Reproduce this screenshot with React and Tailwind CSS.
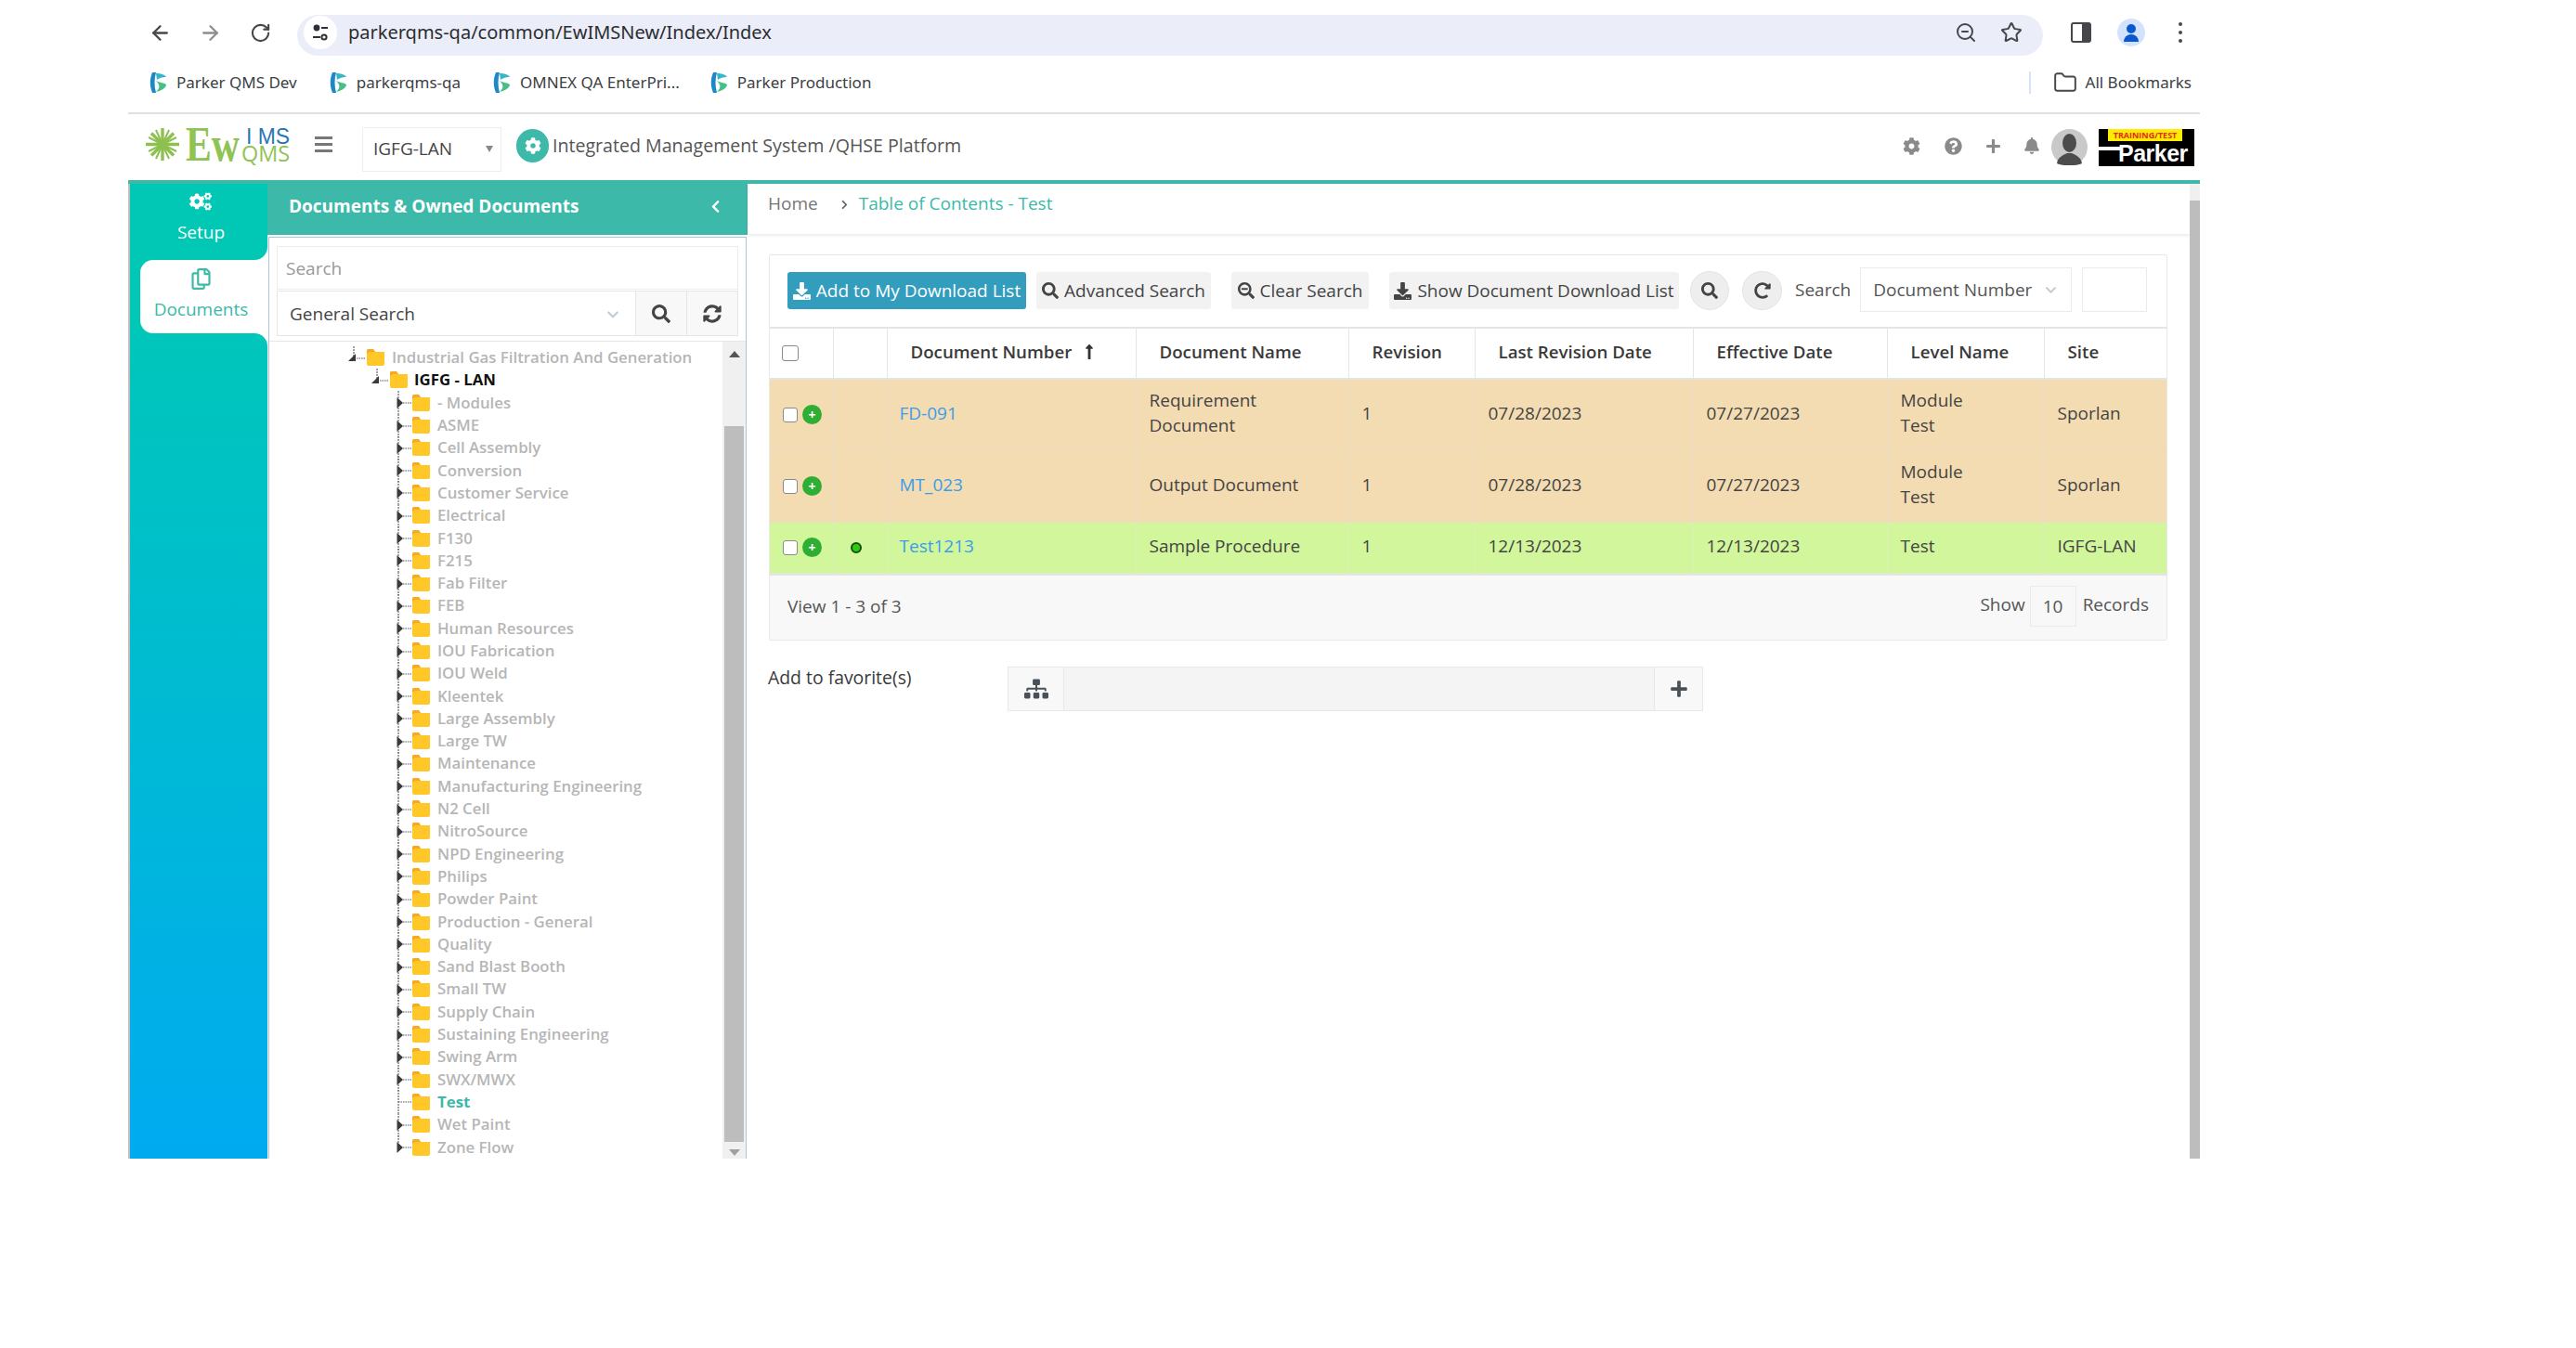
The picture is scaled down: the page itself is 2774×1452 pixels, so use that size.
import React from "react";
import { ArrowLeft, ArrowRight, RotateCw, ZoomOut, Star, Folder } from "lucide-react";
import { FaCogs, FaRegCopy, FaSearch, FaSyncAlt, FaRedoAlt, FaSitemap, FaPlus, FaDownload, FaSearchMinus, FaChevronLeft, FaChevronRight, FaCog, FaQuestionCircle, FaBell, FaLongArrowAltUp, FaChevronDown } from "react-icons/fa";

const Fav = () => (
  <svg width="19" height="24" viewBox="0 0 19 24" className="shrink-0">
    <path d="M3 1 C0 8 0 16 3 23 L7 23 C5 16 5 8 7 1 Z" fill="#1e88c7" />
    <path d="M7 2 C12 2 16 3 18 6 C13 6 11 7 8 9 Z" fill="#35b6c9" />
    <path d="M7 10 C11 12 15 12 18 14 C18 18 12 21 7 22 C11 18 12 15 7 10 Z" fill="#45c089" />
  </svg>
);

const Logo = () => (
  <svg width="172" height="56" viewBox="0 0 172 56" className="shrink-0">
    <g stroke="#8dc04f" strokeWidth="3.4" strokeLinecap="butt">
      <line x1="33" y1="6" x2="33" y2="41" />
      <line x1="15" y1="23.5" x2="51" y2="23.5" />
      <line x1="21" y1="11.5" x2="45" y2="35.5" />
      <line x1="45" y1="11.5" x2="21" y2="35.5" />
      <line x1="26" y1="8" x2="40" y2="39" strokeWidth="2" />
      <line x1="40" y1="8" x2="26" y2="39" strokeWidth="2" />
      <line x1="18" y1="16" x2="48" y2="31" strokeWidth="2" />
      <line x1="48" y1="16" x2="18" y2="31" strokeWidth="2" />
    </g>
    <text x="58" y="40.5" fontFamily="'Liberation Serif',serif" fontWeight="700" fontSize="53" fill="#8fc354" textLength="58" lengthAdjust="spacingAndGlyphs">Ew</text>
    <text x="123" y="22.5" fontFamily="'Liberation Sans',sans-serif" fontSize="24" fill="#2a75b8" textLength="47" lengthAdjust="spacingAndGlyphs">I MS</text>
    <text x="118" y="41.5" fontFamily="'Open Sans',sans-serif" fontSize="24" fill="#8fc354" textLength="52" lengthAdjust="spacingAndGlyphs">QMS</text>
  </svg>
);

const ParkerLogo = () => (
  <div className="relative w-[103px] h-10 bg-black overflow-hidden shrink-0 ml-[12px] mr-[6px]">
    <div className="absolute left-[10px] top-0 w-[80px] h-[13px] bg-[#ffec00] text-[#e8261c] text-[9px] leading-[13px] font-bold text-center whitespace-nowrap">TRAINING/TEST</div>
    <div className="absolute left-0 top-[19px] w-[24px] h-[4px] bg-white"></div>
    <div className="absolute left-[21px] top-[12px] text-white font-bold text-[25px] leading-[28px] tracking-[-0.5px] font-['Liberation_Sans']">Parker</div>
  </div>
);

const Avatar = () => (
  <svg width="39" height="39" viewBox="0 0 39 39" className="shrink-0 ml-[12px]">
    <circle cx="19.5" cy="19.5" r="19.5" fill="#c9c9c9" />
    <ellipse cx="19.5" cy="15" rx="7.5" ry="10" fill="#4c4c4c" />
    <path d="M6 37 C7 30 13 28 17 26 L22 26 C26 28 32 30 33 37 C27 40 12 40 6 37 Z" fill="#4c4c4c" />
  </svg>
);

const FolderIcon = () => (
  <svg width="19" height="18" viewBox="0 0 19 18" className="shrink-0">
    <path d="M0 2 Q0 0 2 0 L7 0 L9 3 L19 3 L19 16 Q19 18 17 18 L2 18 Q0 18 0 16 Z" fill="#ffc727" />
    <path d="M0 2 Q0 0 2 0 L7 0 L9 3 L3 3 L0 5 Z" fill="#f9a825" />
  </svg>
);

const Connector = ({ type, last }) => (
  <svg width="20" height="25" viewBox="0 0 20 25" className="shrink-0">
    {type === "open" ? (
      <>
        <line x1="6" y1="0" x2="6" y2="12" stroke="#444" strokeWidth="1" strokeDasharray="2 1" />
        <line x1="9" y1="13" x2="19" y2="13" stroke="#555" strokeWidth="1" strokeDasharray="1.5 1" />
        <path d="M8 8 L8 16 L0 16 Z" fill="#3a3a3a" />
      </>
    ) : (
      <>
        <line x1="5" y1="0" x2="5" y2={last ? 13 : 25} stroke="#444" strokeWidth="1" strokeDasharray="2 1" />
        <line x1="5" y1="13" x2="19" y2="13" stroke="#555" strokeWidth="1" strokeDasharray="1.5 1" />
        {type === "closed" && <path d="M3.5 7 L10 13 L3.5 19 Z" fill="#3a3a3a" />}
      </>
    )}
  </svg>
);

const children = ["- Modules","ASME","Cell Assembly","Conversion","Customer Service","Electrical","F130","F215","Fab Filter","FEB","Human Resources","IOU Fabrication","IOU Weld","Kleentek","Large Assembly","Large TW","Maintenance","Manufacturing Engineering","N2 Cell","NitroSource","NPD Engineering","Philips","Powder Paint","Production - General","Quality","Sand Blast Booth","Small TW","Supply Chain","Sustaining Engineering","Swing Arm","SWX/MWX","Test","Wet Paint","Zone Flow"];

const rowsData = [
  { bg: "bg-[#f4dcb2]", bd: "border-[#e8dcc6]", num: "FD-091", name: ["Requirement", "Document"], d1: "07/28/2023", d2: "07/27/2023", lvl: ["Module", "Test"], site: "Sporlan", h: "h-[77px]" },
  { bg: "bg-[#f4dcb2]", bd: "border-[#e8dcc6]", num: "MT_023", name: ["Output Document"], d1: "07/28/2023", d2: "07/27/2023", lvl: ["Module", "Test"], site: "Sporlan", h: "h-[77px]" },
  { bg: "bg-[#d1f69c]", bd: "border-[#dcefb8]", num: "Test1213", name: ["Sample Procedure"], d1: "12/13/2023", d2: "12/13/2023", lvl: ["Test"], site: "IGFG-LAN", h: "h-[55px]", dot: true },
];

const headers = ["Document Number", "Document Name", "Revision", "Last Revision Date", "Effective Date", "Level Name", "Site"];

export default function App() {
  return (
    <div className="w-[2774px] h-[1452px] bg-white overflow-hidden font-['Open_Sans',sans-serif] text-[#333]">
      <div className="ml-[138px] w-[2231px]">
        {/* Browser toolbar */}
        <div className="pt-4 flex items-center h-[60px]">
          <div className="w-[182px] flex items-center shrink-0 text-[#45474a] -mt-[6px]">
            <ArrowLeft size={25} strokeWidth={2.2} className="ml-[22px]" />
            <ArrowRight size={25} strokeWidth={2.2} className="ml-[29px] text-[#8b8d90]" />
            <RotateCw size={23} strokeWidth={2.2} className="ml-[30px]" />
          </div>
          <div className="w-[1880px] h-11 rounded-full bg-[#ebeef8] flex items-center pl-[7px] pr-[22px] pb-[6px] shrink-0">
            <div className="w-9 h-9 rounded-full bg-white flex items-center justify-center shrink-0">
              <svg width="20" height="20" viewBox="0 0 20 20" fill="none" stroke="#2f3134" strokeWidth="2">
                <circle cx="6" cy="5" r="2.4" fill="#2f3134" />
                <line x1="11" y1="5" x2="18" y2="5" />
                <circle cx="14" cy="15" r="2.6" />
                <line x1="2" y1="15" x2="10" y2="15" />
              </svg>
            </div>
            <span className="ml-[12px] text-[20px] text-[#2b2d30] font-['Noto_Sans']">parkerqms-qa/common/EwIMSNew/Index/Index</span>
            <ZoomOut size={24} strokeWidth={2} className="ml-auto text-[#45474a]" />
            <Star size={24} strokeWidth={2} className="ml-[25px] text-[#45474a]" />
          </div>
          <svg width="22" height="22" viewBox="0 0 22 22" className="ml-[30px] shrink-0 -mt-[6px]">
            <rect x="1" y="1" width="20" height="20" rx="2" fill="none" stroke="#45474a" strokeWidth="2" />
            <rect x="12" y="1" width="9" height="20" fill="#45474a" />
          </svg>
          <div className="ml-[28px] w-[30px] h-[30px] rounded-full bg-[#d3e3fd] flex flex-col items-center justify-center shrink-0 -mt-[6px]">
            <div className="w-[10px] h-[10px] rounded-full bg-[#0b57d0]"></div>
            <div className="w-[16px] h-[8px] rounded-t-full bg-[#0b57d0] mt-[1px]"></div>
          </div>
          <div className="ml-[36px] flex flex-col gap-[5px] shrink-0 -mt-[6px]">
            <div className="w-1 h-1 rounded-full bg-[#45474a]"></div>
            <div className="w-1 h-1 rounded-full bg-[#45474a]"></div>
            <div className="w-1 h-1 rounded-full bg-[#45474a]"></div>
          </div>
        </div>

        {/* Bookmarks */}
        <div className="mt-[7px] h-11 flex items-center text-[17px] text-[#3c4043] font-['Noto_Sans']">
          <div className="ml-[23px] flex items-center gap-[10px]"><Fav /><span>Parker QMS Dev</span></div>
          <div className="ml-[35px] flex items-center gap-[10px]"><Fav /><span>parkerqms-qa</span></div>
          <div className="ml-[35px] flex items-center gap-[10px]"><Fav /><span>OMNEX QA EnterPri...</span></div>
          <div className="ml-[33px] flex items-center gap-[10px]"><Fav /><span>Parker Production</span></div>
          <div className="ml-auto flex items-center">
            <div className="w-[2px] h-6 bg-[#d3e3fd]"></div>
            <Folder size={26} strokeWidth={1.8} className="ml-[24px] text-[#45474a]" />
            <span className="ml-[9px] mr-[9px]">All Bookmarks</span>
          </div>
        </div>
        <div className="mt-[10px] h-[2px] bg-[#e0e0e0]"></div>

        {/* App header */}
        <div className="h-[71px] flex items-center">
          <div className="ml-[4px] mt-[2px]"><Logo /></div>
          <div className="ml-[25px] -mt-[6px] flex flex-col gap-[4px] w-[19px] shrink-0">
            <div className="h-[3px] bg-[#777]"></div>
            <div className="h-[3px] bg-[#777]"></div>
            <div className="h-[3px] bg-[#777]"></div>
          </div>
          <div className="ml-[32px] w-[150px] h-12 border border-[#eeeeee] flex items-center pl-[11px] pr-2 text-[19px] text-[#444] shrink-0 mt-[4px]">
            IGFG-LAN
            <span className="ml-auto w-0 h-0 border-x-[4px] border-x-transparent border-t-[7px] border-t-[#888]"></span>
          </div>
          <div className="ml-[16px] w-[35px] h-[36px] rounded-full bg-[#3cb9a9] flex items-center justify-center shrink-0 -mt-[3px]">
            <FaCog className="text-white text-[18px]" />
          </div>
          <span className="ml-[4px] text-[19.6px] font-medium text-[#555] -mt-[3px]">Integrated Management System /QHSE Platform</span>
          <div className="ml-auto flex items-center text-[#8a8a8a]">
            <div className="flex items-center -mt-[3px]">
              <FaCog className="text-[19px]" />
              <FaQuestionCircle className="text-[19px] ml-[26px]" />
              <FaPlus className="text-[17px] ml-[25px]" />
              <FaBell className="text-[18px] ml-[24px]" />
            </div>
            <Avatar />
            <ParkerLogo />
          </div>
        </div>
        <div className="h-1 bg-[#3cb9a9]"></div>

        {/* Main */}
        <div className="flex h-[1050px]">
          {/* Icon rail */}
          <div className="w-[2px] bg-[#bdbdbd] shrink-0"></div>
          <div className="w-[148px] flex flex-col shrink-0 bg-white">
            <div className="h-[82px] bg-[#00c8b4] rounded-br-[14px] flex flex-col items-center text-white">
              <FaCogs className="text-[24px] mt-[7px] ml-[3px]" />
              <span className="text-[19px] mt-[7px] leading-[28px] ml-[5px]">Setup</span>
            </div>
            <div className="h-[79px] flex bg-[#00c7b6]">
              <div className="ml-[11px] flex-1 bg-white rounded-l-[14px] flex flex-col items-center text-[#3cb9a9]">
                <FaRegCopy className="text-[23px] mt-[9px] -ml-[6px]" />
                <span className="text-[19px] mt-[7px] leading-[28px] -ml-[6px]">Documents</span>
              </div>
            </div>
            <div className="flex-1 rounded-tr-[14px] bg-gradient-to-b from-[#00c6ba] to-[#00aaf0]"></div>
          </div>

          {/* Tree panel */}
          <div className="w-[517px] flex flex-col shrink-0">
            <div className="h-[55px] bg-[#3cb9a9] flex items-center pl-[23px] pr-[27px] pb-[6px] text-white shrink-0">
              <span className="text-[19px] font-bold">Documents &amp; Owned Documents</span>
              <FaChevronLeft className="ml-auto text-[15px]" />
            </div>
            <div className="flex-1 min-h-0 mt-[2px] mx-[1px] border border-[#a9c6de] border-b-0 flex flex-col">
              <div className="pt-[9px] px-[8px]">
                <div className="h-[47px] border border-[#ededed] flex items-center pl-[9px] pt-[2px] text-[19px] text-[#999]">Search</div>
                <div className="h-[49px] mt-[1px] border border-[#e6e6e6] flex">
                  <div className="flex-1 flex items-center pl-[13px] pr-[17px] pt-[2px] text-[19px] text-[#444]">
                    General Search
                    <FaChevronDown className="ml-auto text-[#c4ccd4] text-[14px]" />
                  </div>
                  <div className="w-[55px] bg-[#f8f8f8] border-l border-[#e6e6e6] flex items-center justify-center text-[#444]"><FaSearch className="text-[20px]" /></div>
                  <div className="w-[55px] bg-[#f8f8f8] border-l border-[#e6e6e6] flex items-center justify-center text-[#444]"><FaSyncAlt className="text-[20px]" /></div>
                </div>
              </div>
              <div className="mt-[5px] flex-1 min-h-0 border-t border-[#e6e6e6] flex">
                <div className="flex-1 pt-[5px] text-[16.8px] leading-[20px] font-semibold text-[#b6b6b6]">
                  <div className="flex items-center h-[24.3px] pl-[85px]"><Connector type="open" /><FolderIcon /><span className="ml-[8px] whitespace-nowrap">Industrial Gas Filtration And Generation</span></div>
                  <div className="flex items-center h-[24.3px] pl-[110px] text-[#111]"><Connector type="open" /><FolderIcon /><span className="ml-[7px] whitespace-nowrap font-bold">IGFG - LAN</span></div>
                  {children.map((c, i) => (
                    <div key={c} className="flex items-center h-[24.3px] pl-[134px]">
                      <Connector type={c === "Test" ? "leaf" : "closed"} last={i === children.length - 1} />
                      <FolderIcon />
                      <span className={c === "Test" ? "ml-[8px] whitespace-nowrap text-[#3cb9a9] font-bold" : "ml-[8px] whitespace-nowrap"}>{c}</span>
                    </div>
                  ))}
                </div>
                <div className="w-[25px] bg-[#f0f0f0] flex flex-col items-center shrink-0">
                  <div className="h-[91px] pt-[10px] shrink-0"><div className="w-0 h-0 border-x-[6px] border-x-transparent border-b-[7px] border-b-[#555]"></div></div>
                  <div className="w-[21px] h-[771px] bg-[#bdbdbd] shrink-0"></div>
                  <div className="mt-[8px] w-0 h-0 border-x-[6px] border-x-transparent border-t-[7px] border-t-[#a0a0a0]"></div>
                </div>
              </div>
            </div>
          </div>

          {/* Content */}
          <div className="flex-1 min-w-0 flex">
            <div className="flex-1 min-w-0">
              <div className="h-[54px] shadow-[0_2px_3px_rgba(0,0,0,0.08)] pl-[22px] pt-[6px] flex items-start text-[19px]">
                <span className="text-[#777] leading-[30px]">Home</span>
                <FaChevronRight className="ml-[23px] mr-[10px] mt-[11px] text-[#666] text-[11px]" />
                <span className="text-[#3cb9a9] leading-[30px]">Table of Contents - Test</span>
              </div>

              <div className="mt-[22px] ml-[23px] w-[1506px] border border-[#e8e8e8] rounded-[2px]">
                <div className="h-[77px] pt-[18px] pl-[19px] flex items-start text-[19px]">
                  <button className="w-[257px] h-10 bg-[#329dbd] rounded-[3px] text-white flex items-center justify-center gap-[6px] shrink-0">
                    <FaDownload className="text-[19px]" />Add to My Download List
                  </button>
                  <button className="ml-[11px] w-[188px] h-10 bg-[#f2f2f2] rounded-[3px] text-[#444] flex items-center justify-center gap-[6px] shrink-0">
                    <FaSearch className="text-[18px]" />Advanced Search
                  </button>
                  <button className="ml-[22px] w-[148px] h-10 bg-[#f2f2f2] rounded-[3px] text-[#444] flex items-center justify-center gap-[6px] shrink-0">
                    <FaSearchMinus className="text-[18px]" />Clear Search
                  </button>
                  <button className="ml-[22px] w-[312px] h-10 bg-[#f2f2f2] rounded-[3px] text-[#444] flex items-center justify-center gap-[6px] shrink-0">
                    <FaDownload className="text-[19px]" />Show Document Download List
                  </button>
                  <div className="ml-[12px] -mt-[1px] w-[42px] h-[42px] rounded-full bg-[#eeeeee] border border-[#e4e4e4] flex items-center justify-center text-[#444] shrink-0"><FaSearch className="text-[18px]" /></div>
                  <div className="ml-[14px] -mt-[1px] w-[43px] h-[42px] rounded-full bg-[#eeeeee] border border-[#e4e4e4] flex items-center justify-center text-[#444] shrink-0"><FaRedoAlt className="text-[18px]" /></div>
                  <span className="ml-[14px] leading-[38px] text-[#555] shrink-0">Search</span>
                  <div className="ml-[10px] -mt-[5px] w-[228px] h-12 border border-[#ebebeb] flex items-center pl-[13px] pr-[15px] text-[#555] shrink-0 whitespace-nowrap">
                    Document Number
                    <FaChevronDown className="ml-auto text-[#c4ccd4] text-[13px]" />
                  </div>
                  <div className="ml-[11px] -mt-[5px] w-[70px] h-12 border border-[#ebebeb] shrink-0"></div>
                </div>

                <table className="w-[1504px] table-fixed border-collapse text-[19px]">
                  <colgroup>
                    <col className="w-[68px]" /><col className="w-[58px]" /><col className="w-[268px]" /><col className="w-[229px]" /><col className="w-[136px]" /><col className="w-[235px]" /><col className="w-[209px]" /><col className="w-[169px]" /><col className="w-[132px]" />
                  </colgroup>
                  <thead>
                    <tr className="h-[55px] border-y-2 border-[#e4e4e4] text-[#3a3a3a] text-[18.7px]">
                      <th className="border-r border-[#e6e6e6] pl-[13px] text-left">
                        <div className="w-[18px] h-[17px] rounded-[3px] border border-[#8a8a8a] bg-white"></div>
                      </th>
                      <th className="border-r border-[#e6e6e6]"></th>
                      {headers.map((h, i) => (
                        <th key={h} className="border-r border-[#e6e6e6] pl-[25px] pb-[3px] text-left font-semibold whitespace-nowrap last:border-r-0">
                          {h}
                          {i === 0 && <FaLongArrowAltUp className="inline ml-[10px] mb-[3px] text-[18px] text-[#333]" />}
                        </th>
                      ))}
                    </tr>
                  </thead>
                  <tbody className="text-[#444]">
                    {rowsData.map((r) => (
                      <tr key={r.num} className={`${r.h} ${r.bg} border-b ${r.bd}`}>
                        <td className={`border-r ${r.bd} pl-[14px]`}>
                          <div className="flex items-center gap-[5px]">
                            <div className="w-[16px] h-[16px] rounded-[3px] border border-[#8a8a8a] bg-white"></div>
                            <div className="w-[21px] h-[21px] rounded-full bg-[#2fae34] text-white flex items-center justify-center text-[14px] leading-none font-bold">+</div>
                          </div>
                        </td>
                        <td className={`border-r ${r.bd} pl-[18px]`}>
                          {r.dot && <div className="w-[12px] h-[12px] rounded-full bg-[#2ecb0c] border-2 border-[#14500f]"></div>}
                        </td>
                        <td className={`border-r ${r.bd} pl-[13px] pb-[3px] text-[#3b9dea]`}>{r.num}</td>
                        <td className={`border-r ${r.bd} pl-[14px] pb-[3px] leading-[27px]`}>{r.name.map((n) => <div key={n}>{n}</div>)}</td>
                        <td className={`border-r ${r.bd} pl-[14px] pb-[3px]`}>1</td>
                        <td className={`border-r ${r.bd} pl-[14px] pb-[3px]`}>{r.d1}</td>
                        <td className={`border-r ${r.bd} pl-[14px] pb-[3px]`}>{r.d2}</td>
                        <td className={`border-r ${r.bd} pl-[14px] pb-[3px] leading-[27px]`}>{r.lvl.map((n) => <div key={n}>{n}</div>)}</td>
                        <td className="pl-[14px] pb-[3px]">{r.site}</td>
                      </tr>
                    ))}
                  </tbody>
                </table>

                <div className="h-[71px] bg-[#f8f8f8] border-t-2 border-[#e4e4e4] flex items-center pl-[19px] pr-[19px] pb-[2px] text-[19px] text-[#555]">
                  <span>View 1 - 3 of 3</span>
                  <span className="ml-auto -mt-[4px]">Show</span>
                  <div className="ml-[5px] w-[50px] h-[44px] border border-[#ebebeb] flex items-center justify-center">10</div>
                  <span className="ml-[7px] -mt-[4px]">Records</span>
                </div>
              </div>

              <div className="mt-[28px] ml-[22px] flex items-start">
                <span className="w-[258px] -mt-[3px] text-[19.4px] font-medium leading-[30px] text-[#3a3a3a] shrink-0">Add to favorite(s)</span>
                <div className="w-[749px] h-12 flex border border-[#e8e8e8] shrink-0">
                  <div className="w-[60px] bg-[#f8f8f8] border-r border-[#e8e8e8] flex items-center justify-center text-[#495057]"><FaSitemap className="text-[26px]" /></div>
                  <div className="flex-1 bg-[#f4f4f4]"></div>
                  <div className="w-[52px] bg-[#f8f8f8] border-l border-[#e8e8e8] flex items-center justify-center text-[#495057]"><FaPlus className="text-[20px]" /></div>
                </div>
              </div>
            </div>
            <div className="w-[11px] bg-[#f0f0f0] shrink-0">
              <div className="h-[18px]"></div>
              <div className="h-[1032px] bg-[#bdbdbd]"></div>
            </div>
          </div>
        </div>
      </div>
    </div>
  );
}
